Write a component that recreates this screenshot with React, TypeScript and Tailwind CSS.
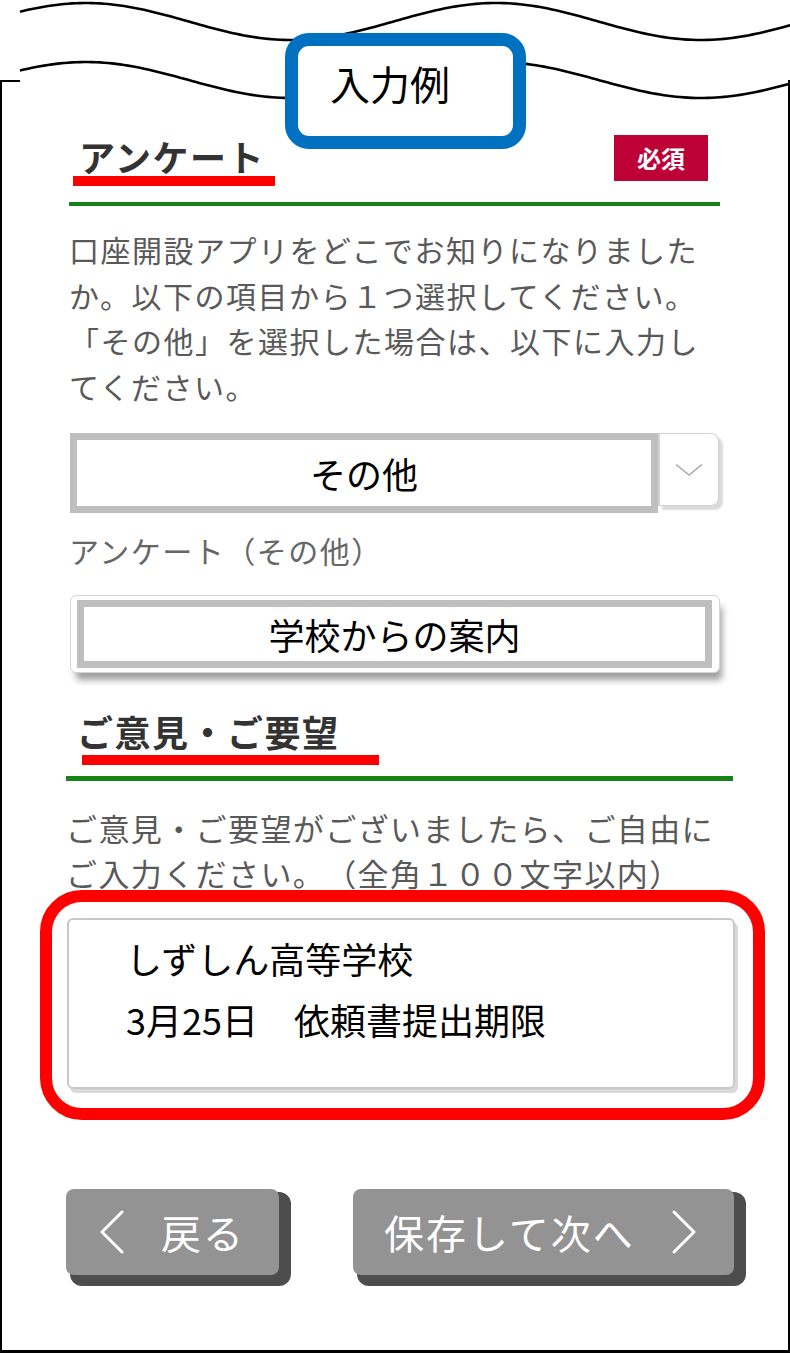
import React from 'react';

// Wavy "torn" top edge, drawn as two parallel sine lines
const wavePath = (center: number, amp: number) => {
  const pts: string[] = [];
  for (let x = 20; x <= 792; x += 4) {
    const y = center - amp * Math.cos((2 * Math.PI * (x - 86)) / 410);
    pts.push(`${x},${y.toFixed(2)}`);
  }
  return 'M' + pts.join(' L');
};

const SectionHeading: React.FC<{ title: string; textMl: string; lineMl: string; lineW: string }> = ({
  title,
  textMl,
  lineMl,
  lineW,
}) => (
  <div>
    <h2 className={`${textMl} text-[36px] font-bold leading-[40px] tracking-[1.5px] text-[#333]`}>{title}</h2>
    <div className={`${lineMl} ${lineW} h-[10px] bg-[#ff0000]`} />
  </div>
);

const ChevronLeft = () => (
  <svg width="26" height="44" viewBox="0 0 26 44" fill="none">
    <polyline points="23,2 3,22 23,42" stroke="white" strokeWidth="3" strokeLinecap="round" strokeLinejoin="round" />
  </svg>
);

const ChevronRight = () => (
  <svg width="26" height="44" viewBox="0 0 26 44" fill="none">
    <polyline points="3,2 23,22 3,42" stroke="white" strokeWidth="3" strokeLinecap="round" strokeLinejoin="round" />
  </svg>
);

export default function App() {
  return (
    <div className="relative w-[790px] h-[1353px] overflow-hidden bg-white font-['Noto_Sans_CJK_JP','Noto_Sans',sans-serif] [text-spacing-trim:space-all]">
      {/* Frame */}
      <div className="pt-[80px]">
        <div className="h-[1273px] border-l-2 border-r-2 border-b-[3px] border-black">
          <div className="ml-[67px] w-[651px]">
            {/* Section 1: アンケート */}
            <div className="flex items-start justify-between pt-[55px] pr-[12px]">
              <div className="pt-[1px]">
                <SectionHeading title="アンケート" textMl="ml-[10px]" lineMl="ml-[4px]" lineW="w-[202px]" />
              </div>
              <div className="flex h-[46px] w-[94px] items-center justify-center bg-[#bd0036] text-[24px] font-bold text-white">
                必須
              </div>
            </div>
            <div className="mt-[16px] h-[4px] bg-[#178217]" />

            <p className="mt-[21px] text-[30px] leading-[45.5px] tracking-[1.5px] text-[#595959] whitespace-nowrap">
              口座開設アプリをどこでお知りになりました
              <br />
              か。以下の項目から１つ選択してください。
              <br />
              「その他」を選択した場合は、以下に入力し
              <br />
              てください。
            </p>

            {/* Select */}
            <div className="mt-[24px] ml-[1px] flex items-start">
              <div className="flex h-[80px] w-[588px] shrink-0 items-center justify-center border-[7px] border-[#bfbfbf] bg-white text-[36px] text-black">
                その他
              </div>
              <div className="flex h-[73px] w-[61px] shrink-0 items-center justify-center rounded-r-[8px] border border-l-2 border-[#d2d2d2] bg-white shadow-[4px_4px_2px_rgba(0,0,0,0.14)]">
                <svg width="28" height="14" viewBox="0 0 28 14" fill="none">
                  <polyline points="1,1.5 14,12 27,1.5" stroke="#a8a8a8" strokeWidth="1.6" />
                </svg>
              </div>
            </div>

            <p className="mt-[19px] text-[30px] leading-[36px] tracking-[1.5px] text-[#666]">アンケート（その他）</p>

            {/* Text input */}
            <div className="mt-[27px] ml-[1px] h-[78px] w-[650px] rounded-[6px] border border-[#d4d4d4] bg-white px-[6px] pt-[4px] shadow-[4px_9px_7px_-2px_rgba(0,0,0,0.38)]">
              <div className="flex h-[68px] w-[635px] items-center justify-center border-[7px] border-[#bfbfbf] bg-white text-[36px] text-black">
                学校からの案内
              </div>
            </div>

            {/* Section 2: ご意見・ご要望 */}
            <div className="mt-[38px]">
              <SectionHeading title="ご意見・ご要望" textMl="ml-[8px]" lineMl="ml-[13px] mt-[4px]" lineW="w-[297px]" />
            </div>
            <div className="mt-[11px] -ml-[3px] h-[5px] w-[667px] bg-[#178217]" />

            <p className="mt-[24px] -ml-[3px] text-[31px] leading-[45px] tracking-[1.4px] text-[#595959] whitespace-nowrap">
              ご意見・ご要望がございましたら、ご自由に
              <br />
              ご入力ください。（全角１００文字以内）
            </p>

            {/* Highlighted textarea */}
            <div className="-mt-[5px] -ml-[29px] h-[230px] w-[725px] rounded-[42px] border-[12px] border-[#ff0000] pl-[15px] pt-[16px]">
              <div className="h-[171px] w-[668px] rounded-[6px] border-2 border-[#c8c8c8] bg-white pl-[57px] pt-[8px] text-[36px] leading-[61px] text-black shadow-[3px_4px_0_#d9d9d9]">
                <div>しずしん高等学校</div>
                <div>3月25日　依頼書提出期限</div>
              </div>
            </div>

            {/* Buttons */}
            <div className="mt-[69px] -ml-[3px] flex gap-[74px]">
              <button className="flex h-[86px] w-[213px] shrink-0 items-center rounded-[8px] bg-[#939393] pl-[33px] shadow-[8px_7px_0_4px_#4d4d4d]">
                <ChevronLeft />
                <span className="ml-[36px] text-[40px] leading-none tracking-[2px] text-white">戻る</span>
              </button>
              <button className="flex h-[86px] w-[381px] shrink-0 items-center rounded-[8px] bg-[#939393] pl-[31px] shadow-[8px_7px_0_4px_#4d4d4d]">
                <span className="text-[40px] leading-none tracking-[2px] text-white">保存して次へ</span>
                <span className="ml-[36px]">
                  <ChevronRight />
                </span>
              </button>
            </div>
          </div>
        </div>
      </div>

      {/* Wavy edge over the top of the frame */}
      <svg className="absolute left-0 top-0" width="790" height="110" viewBox="0 0 790 110" fill="none">
        <path d={wavePath(21.5, 18.5)} stroke="black" strokeWidth="2.6" />
        <path d={wavePath(80, 18)} stroke="black" strokeWidth="2.6" />
        <line x1="0" y1="81" x2="20" y2="81" stroke="black" strokeWidth="2" />
      </svg>

      {/* 入力例 label */}
      <div className="absolute left-[285px] top-[33px] h-[116px] w-[241px] rounded-[24px] border-[13px] border-[#0070c0] bg-white pl-[32px] pt-[17px] text-[40px] leading-[40px] text-black">
        入力例
      </div>
    </div>
  );
}
